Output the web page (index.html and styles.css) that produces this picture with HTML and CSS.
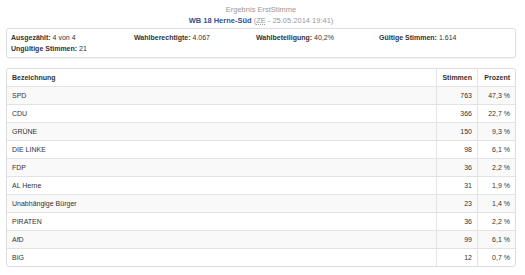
FILE: index.html
```html
<!DOCTYPE html>
<html lang="de">
<head>
<meta charset="utf-8">
<link rel="stylesheet" href="styles.css">
</head>
<body>
<div class="page">
  <div class="title">
    <div class="title-main">Ergebnis ErstStimme</div>
    <div class="title-sub"><span class="wb">WB 18 Herne-Süd</span> (<abbr class="abbr">ZE</abbr> - 25.05.2014 19:41)</div>
  </div>
  <div class="info">
    <div class="info-item"><b>Ausgezählt:</b> 4 von 4</div>
    <div class="info-item"><b>Wahlberechtigte:</b> 4.067</div>
    <div class="info-item"><b>Wahlbeteiligung:</b> 40,2%</div>
    <div class="info-item"><b>Gültige Stimmen:</b> 1.614</div>
    <div class="info-item"><b>Ungültige Stimmen:</b> 21</div>
  </div>
  <table class="results">
    <thead>
      <tr><th class="name">Bezeichnung</th><th class="num c-st">Stimmen</th><th class="num c-pr">Prozent</th></tr>
    </thead>
    <tbody>
      <tr><td>SPD</td><td class="num">763</td><td class="num">47,3 %</td></tr>
      <tr><td>CDU</td><td class="num">366</td><td class="num">22,7 %</td></tr>
      <tr><td>GRÜNE</td><td class="num">150</td><td class="num">9,3 %</td></tr>
      <tr><td>DIE LINKE</td><td class="num">98</td><td class="num">6,1 %</td></tr>
      <tr><td>FDP</td><td class="num">36</td><td class="num">2,2 %</td></tr>
      <tr><td>AL Herne</td><td class="num">31</td><td class="num">1,9 %</td></tr>
      <tr><td>Unabhängige Bürger</td><td class="num">23</td><td class="num">1,4 %</td></tr>
      <tr><td>PIRATEN</td><td class="num">36</td><td class="num">2,2 %</td></tr>
      <tr><td>AfD</td><td class="num">99</td><td class="num">6,1 %</td></tr>
      <tr><td>BIG</td><td class="num">12</td><td class="num">0,7 %</td></tr>
    </tbody>
  </table>
</div>
</body>
</html>
```
FILE: styles.css
```css
html, body {
  margin: 0;
  padding: 0;
  background: #fff;
}
body {
  font-family: "Liberation Sans", Arial, sans-serif;
  font-size: 7px;
  color: #333;
}
.page {
  width: 510px;
  padding-left: 6px;
}
.title {
  text-align: center;
  font-size: 7.5px;
  line-height: 11px;
  padding-top: 4px;
  color: #999;
}
.wb {
  font-weight: bold;
  color: #34508f;
}
.abbr {
  text-decoration: underline dotted;
  text-underline-offset: 1px;
  cursor: help;
}
.info {
  margin-top: 2px;
  border: 1px solid #ddd;
  border-radius: 3px;
  padding: 3px 4px;
  display: grid;
  grid-template-columns: 123px 122px 123px 123px;
  line-height: 11px;
  box-shadow: 0 1px 1px rgba(0,0,0,0.04);
}
.info b {
  font-weight: bold;
}
.results {
  margin-top: 10px;
  width: 510px;
  border-collapse: separate;
  border-spacing: 0;
  border: 1px solid #ddd;
  border-radius: 3px;
  line-height: 9px;
  table-layout: fixed;
}
.results th, .results td {
  padding: 4px 5px 4px 5px;
  border-top: 1px solid #e3e3e3;
  text-align: left;
}
.results thead th {
  border-top: 0;
  font-weight: bold;
  height: 8px;
}
.results .num {
  text-align: right;
}
.results th.c-st {
  width: 30px;
}
.results th.c-pr {
  width: 27px;
}
.results th + th, .results td + td {
  border-left: 1px solid #e3e3e3;
}
.results tbody tr:nth-child(odd) td {
  background: #f9f9f9;
}
```
